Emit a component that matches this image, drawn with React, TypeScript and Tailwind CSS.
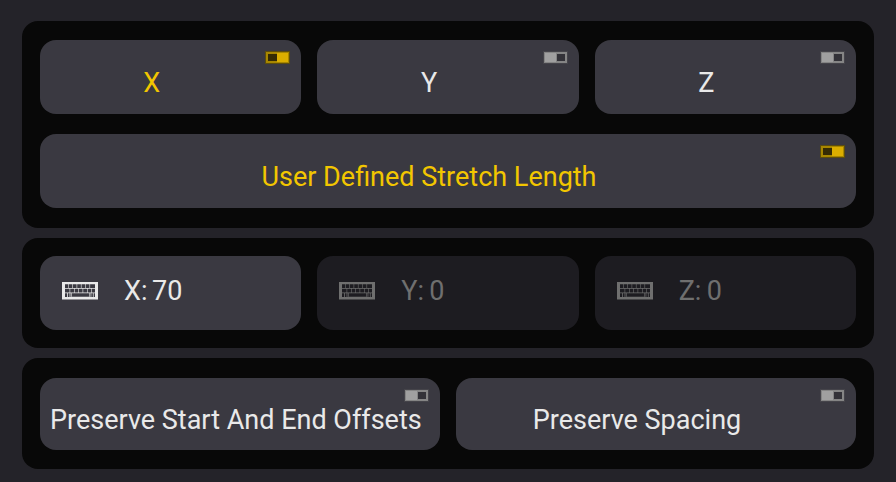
import { useState } from "react";
import clsx from "clsx";

type ToggleKey = "x" | "y" | "z" | "userLength" | "offsets" | "spacing";
type Axis = "X" | "Y" | "Z";

const AXES: Axis[] = ["X", "Y", "Z"];

function SwitchIcon({ on }: { on: boolean }) {
  return (
    <svg
      width="25"
      height="13"
      viewBox="0 0 25 13"
      shapeRendering="crispEdges"
      className="absolute right-[11px] top-[11px]"
      aria-hidden="true"
    >
      {on ? (
        <>
          <rect width="25" height="13" fill="#5e4e0c" />
          <rect x="1" y="1" width="23" height="11" fill="#a88700" />
          <rect x="12" y="2" width="11" height="9" fill="#dbae00" />
          <rect x="3" y="3" width="9" height="7" fill="#352b04" />
        </>
      ) : (
        <>
          <rect width="25" height="13" fill="#45444a" />
          <rect x="1" y="1" width="23" height="11" fill="#858585" />
          <rect x="2" y="2" width="11" height="9" fill="#a0a0a0" />
          <rect x="14" y="3" width="8" height="7" fill="#333238" />
        </>
      )}
    </svg>
  );
}

function KeyboardIcon() {
  return (
    <svg width="36" height="18" viewBox="0 0 36 18" className="shrink-0" aria-hidden="true">
      <path
        fill="currentColor"
        fillRule="evenodd"
        d="M0 0H36V17.5H0Z
          M3 2.2H6V6H3Z M6.6 2.2H10.3V6H6.6Z M10.9 2.2H14.6V6H10.9Z M15.2 2.2H18.9V6H15.2Z M19.5 2.2H23.2V6H19.5Z M23.8 2.2H27.5V6H23.8Z M28.1 2.2H33V6H28.1Z
          M3 6.8H7.6V10.4H3Z M8.2 6.8H12V10.4H8.2Z M12.6 6.8H16.3V10.4H12.6Z M16.9 6.8H20.6V10.4H16.9Z M21.2 6.8H25V10.4H21.2Z M25.6 6.8H29.3V10.4H25.6Z M29.9 6.8H33V10.4H29.9Z
          M3 11.2H5V15H3Z M5.8 11.2H7.6V15H5.8Z M8.4 11.2H9.4V15H8.4Z M10 11.2H27V14.7H10Z M27.6 11.2H28.6V15H27.6Z M29.3 11.2H30.9V15H29.3Z M31.6 11.2H33V15H31.6Z"
      />
    </svg>
  );
}

function ToggleButton({
  label,
  on,
  onClick,
  className = "h-[74px]",
}: {
  label: string;
  on: boolean;
  onClick: () => void;
  className?: string;
}) {
  return (
    <button
      type="button"
      aria-pressed={on}
      onClick={onClick}
      className={clsx(
        "relative min-w-0 rounded-2xl bg-[#3a3941] pl-[10px] pr-12 pt-3 text-center whitespace-nowrap",
        on ? "text-[#f2c600]" : "text-[#e9e9e9]",
        className
      )}
    >
      {label}
      <SwitchIcon on={on} />
    </button>
  );
}

function AxisField({
  axis,
  value,
  disabled,
  onChange,
}: {
  axis: Axis;
  value: string;
  disabled: boolean;
  onChange: (value: string) => void;
}) {
  return (
    <label
      className={clsx(
        "flex h-[74px] min-w-0 items-center rounded-2xl pb-[5px] pl-[22px] pr-4",
        disabled ? "bg-[#1d1c21] text-[#6f6f6f]" : "bg-[#3a3941] text-[#e9e9e9]"
      )}
    >
      <KeyboardIcon />
      <span className="ml-[26px] w-7 shrink-0">{axis}:</span>
      <input
        type="text"
        inputMode="numeric"
        value={value}
        disabled={disabled}
        onChange={(e) => onChange(e.target.value)}
        className="w-full min-w-0 bg-transparent outline-none"
      />
    </label>
  );
}

export default function App() {
  const [toggles, setToggles] = useState<Record<ToggleKey, boolean>>({
    x: true,
    y: false,
    z: false,
    userLength: true,
    offsets: false,
    spacing: false,
  });
  const [lengths, setLengths] = useState<Record<Axis, string>>({ X: "70", Y: "0", Z: "0" });

  const flip = (key: ToggleKey) => setToggles((prev) => ({ ...prev, [key]: !prev[key] }));

  return (
    <main className="flex min-h-screen flex-col gap-[10px] bg-[#242329] px-[22px] pb-3 pt-[21px] font-[Roboto,sans-serif] text-[27px] leading-8">
      <section className="flex flex-col gap-5 rounded-2xl bg-[#080808] px-[18px] pb-5 pt-[19px]">
        <div className="grid grid-cols-3 gap-4">
          <ToggleButton label="X" on={toggles.x} onClick={() => flip("x")} />
          <ToggleButton label="Y" on={toggles.y} onClick={() => flip("y")} />
          <ToggleButton label="Z" on={toggles.z} onClick={() => flip("z")} />
        </div>
        <ToggleButton
          label="User Defined Stretch Length"
          on={toggles.userLength}
          onClick={() => flip("userLength")}
        />
      </section>

      <section className="grid grid-cols-3 gap-4 rounded-2xl bg-[#080808] p-[18px]">
        {AXES.map((axis) => (
          <AxisField
            key={axis}
            axis={axis}
            value={lengths[axis]}
            disabled={!toggles[axis.toLowerCase() as ToggleKey]}
            onChange={(value) => setLengths((prev) => ({ ...prev, [axis]: value }))}
          />
        ))}
      </section>

      <section className="grid grid-cols-2 gap-4 rounded-2xl bg-[#080808] px-[18px] pb-[19px] pt-5">
        <ToggleButton
          label="Preserve Start And End Offsets"
          on={toggles.offsets}
          onClick={() => flip("offsets")}
          className="h-[72px]"
        />
        <ToggleButton
          label="Preserve Spacing"
          on={toggles.spacing}
          onClick={() => flip("spacing")}
          className="h-[72px]"
        />
      </section>
    </main>
  );
}
